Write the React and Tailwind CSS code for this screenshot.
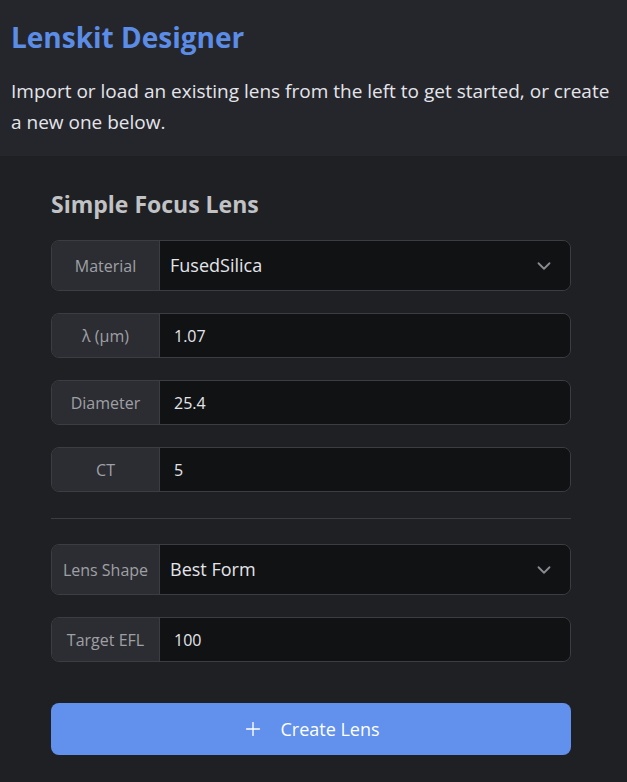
import { ChevronDown, Plus } from "lucide-react";

const font = { fontFamily: '"Open Sans", "Noto Sans", sans-serif' };

function Field({ label, value, select, tall }) {
  return (
    <div
      className={`flex rounded-lg border border-[#3c3d42] overflow-hidden ${
        tall ? "h-[51px]" : "h-[45px]"
      }`}
    >
      <div className="w-[108px] shrink-0 flex items-center justify-center bg-[#2c2d32] border-r border-[#3c3d42] text-[16px] text-[#9fa0a5]">
        {label}
      </div>
      <div className="flex-1 flex items-center justify-between bg-[#111214] pl-[10px] pr-[15px]">
        <span className={select ? "text-[18px] text-[#e4e5ea]" : "text-[16px] text-[#e4e5ea] pl-[4px]"}>
          {value}
        </span>
        {select && <ChevronDown size={22} strokeWidth={2} className="text-[#8a8b90]" />}
      </div>
    </div>
  );
}

export default function App() {
  return (
    <div className="min-h-[782px] bg-[#1f2023]" style={font}>
      <header className="bg-[#25262b] h-[156px] px-[11px] pt-[18px]">
        <h1 className="text-[28px] font-bold text-[#5b8ce6] leading-[38px]">Lenskit Designer</h1>
        <p className="mt-[20px] text-[19px] leading-[31px] text-[#e4e5ea]">
          Import or load an existing lens from the left to get started, or create a new one below.
        </p>
      </header>
      <main className="pl-[51px] pr-[56px] pt-[32px]">
        <h2 className="text-[23px] font-bold text-[#c1c2c5] leading-[32px]">Simple Focus Lens</h2>
        <div className="mt-[20px] flex flex-col gap-[22px]">
          <Field label="Material" value="FusedSilica" select tall />
          <Field label="λ (µm)" value="1.07" />
          <Field label="Diameter" value="25.4" />
          <Field label="CT" value="5" />
        </div>
        <div className="mt-[26px] mb-[25px] border-t border-[#3c3d42]" />
        <div className="flex flex-col gap-[22px]">
          <Field label="Lens Shape" value="Best Form" select tall />
          <Field label="Target EFL" value="100" />
        </div>
        <button className="mt-[41px] w-full h-[52px] rounded-lg bg-[#6191ec] flex items-center justify-center gap-[16px] text-[18px] text-white">
          <Plus size={22} strokeWidth={1.5} />
          <span>Create Lens</span>
        </button>
      </main>
    </div>
  );
}
